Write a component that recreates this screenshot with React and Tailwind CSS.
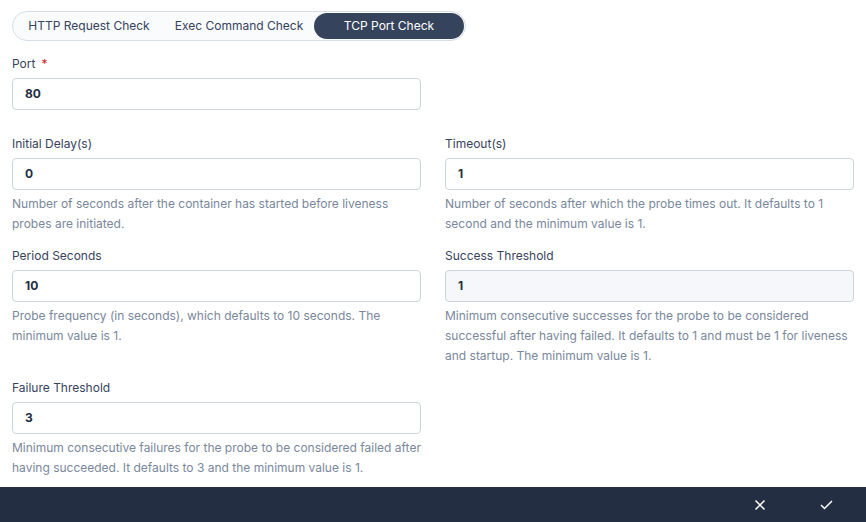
import React from "react";

function Field({ label, required, value, desc, disabled }) {
  return (
    <div className="flex flex-col">
      <div className="h-5 text-[12px] leading-5 text-[#36435c]">
        {label}
        {required && <span className="ml-[6px] text-[#ca2621]">*</span>}
      </div>
      <div
        className={
          "mt-[4px] flex h-8 items-center rounded-[4px] border border-[#ccd3db] px-3 text-[12px] font-bold text-[#242e42] " +
          (disabled ? "bg-[#f5f7fa]" : "bg-white")
        }
      >
        {value}
      </div>
      {desc && (
        <div className="mt-[4px] text-[12px] leading-5 text-[#79879c]">{desc}</div>
      )}
    </div>
  );
}

export default function App() {
  const tabs = ["HTTP Request Check", "Exec Command Check", "TCP Port Check"];
  return (
    <div
      className="flex h-[522px] w-[866px] flex-col bg-white"
      style={{ fontFamily: "Inter, 'Liberation Sans', sans-serif" }}
    >
      <div className="flex-1 px-3 pt-[11px]">
        <div className="inline-flex h-[30px] rounded-full border border-[#d8dee5] bg-[#f9fbfd] p-[1px]">
          {tabs.map((t, i) => (
            <div
              key={t}
              className={
                "flex h-[26px] w-[150px] items-center justify-center rounded-full text-[12px] " +
                (i === 2 ? "bg-[#36435c] text-white" : "text-[#36435c]")
              }
            >
              {t}
            </div>
          ))}
        </div>

        <div className="mt-[13px] w-[409px]">
          <Field label="Port" required value="80" />
        </div>

        <div className="mt-[24px] grid grid-cols-2 gap-x-[24px] gap-y-[12px]">
          <Field
            label="Initial Delay(s)"
            value="0"
            desc="Number of seconds after the container has started before liveness probes are initiated."
          />
          <Field
            label="Timeout(s)"
            value="1"
            desc="Number of seconds after which the probe times out. It defaults to 1 second and the minimum value is 1."
          />
          <Field
            label="Period Seconds"
            value="10"
            desc="Probe frequency (in seconds), which defaults to 10 seconds. The minimum value is 1."
          />
          <Field
            label="Success Threshold"
            value="1"
            disabled
            desc="Minimum consecutive successes for the probe to be considered successful after having failed. It defaults to 1 and must be 1 for liveness and startup. The minimum value is 1."
          />
          <Field
            label="Failure Threshold"
            value="3"
            desc="Minimum consecutive failures for the probe to be considered failed after having succeeded. It defaults to 3 and the minimum value is 1."
          />
        </div>
      </div>

      <div className="flex h-[35px] items-center justify-end bg-[#242e42] pr-[6px]">
        <button className="flex h-[35px] w-[67px] items-center justify-center text-white">
          <svg width="12" height="12" viewBox="0 0 12 12" fill="none" stroke="currentColor" strokeWidth="1.5">
            <path d="M1.5 1.5 L10.5 10.5 M10.5 1.5 L1.5 10.5" />
          </svg>
        </button>
        <button className="flex h-[35px] w-[67px] items-center justify-center text-white">
          <svg width="13" height="10" viewBox="0 0 13 10" fill="none" stroke="currentColor" strokeWidth="1.5">
            <path d="M1 5 L4.5 8.5 L12 1" />
          </svg>
        </button>
      </div>
    </div>
  );
}
